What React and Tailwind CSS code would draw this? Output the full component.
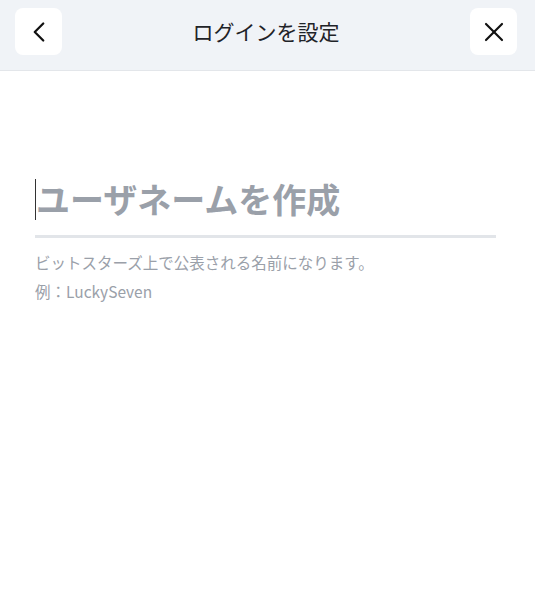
import { ChevronLeft, X } from 'lucide-react'

export default function App() {
  return (
    <div className="w-[535px] h-[600px] bg-white overflow-hidden" style={{ fontFamily: '"Noto Sans CJK JP", "Noto Sans", sans-serif' }}>
      {/* Header */}
      <div className="h-[71px] bg-[#f0f3f7] border-b border-[#e3e6ea] flex items-start justify-between pl-[15px] pr-[18px] pt-[8px]">
        <button className="w-[47px] h-[47px] bg-white rounded-[8px] flex items-center justify-center text-[#111]">
          <ChevronLeft size={34} strokeWidth={1.6} />
        </button>
        <h1 className="text-[21px] text-[#1f2328] leading-[47px]">ログインを設定</h1>
        <button className="w-[47px] h-[47px] bg-white rounded-[8px] flex items-center justify-center text-[#111]">
          <X size={32} strokeWidth={1.6} />
        </button>
      </div>

      {/* Username */}
      <div className="pl-[35px] pr-[39px] pt-[106px]">
        <div className="flex items-center border-b-[3px] border-[#e2e5e9] pb-[14px]">
          <span className="shrink-0 w-[1px] h-[41px] bg-[#333]" />
          <input
            type="text"
            placeholder="ユーザネームを作成"
            className="min-w-0 flex-1 text-[34px] font-bold leading-[44px] outline-none placeholder:text-[#9aa0a9] text-[#1f2328] bg-transparent"
          />
        </div>
        <p className="mt-[13px] text-[15.5px] text-[#9aa0a9] leading-[22px]">ビットスターズ上で公表される名前になります。</p>
        <p className="mt-[7px] text-[15.5px] text-[#9aa0a9] leading-[22px]">例：LuckySeven</p>
      </div>
    </div>
  )
}
